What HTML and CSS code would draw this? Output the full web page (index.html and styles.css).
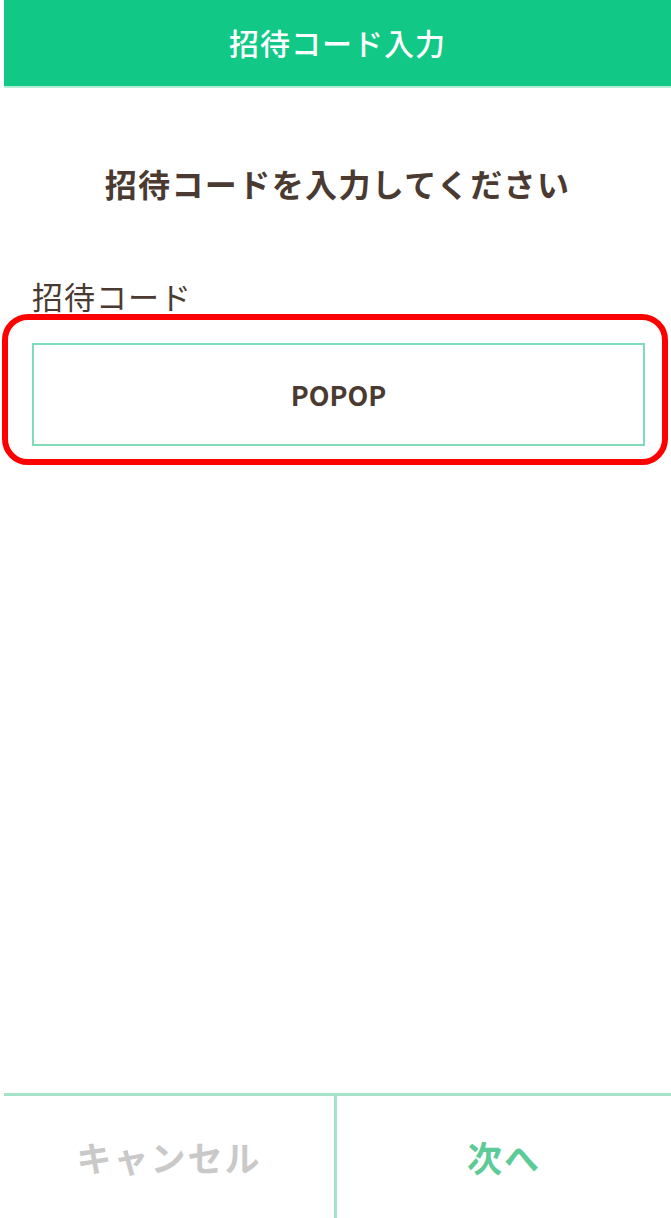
FILE: index.html
```html
<!DOCTYPE html>
<html lang="ja">
<head>
<meta charset="utf-8">
<link rel="stylesheet" href="styles.css">
</head>
<body>
<div class="page">
  <header class="header"><h1 class="header-title">招待コード入力</h1></header>
  <main class="main">
    <h2 class="title">招待コードを入力してください</h2>
    <div class="label">招待コード</div>
    <div class="highlight">
      <div class="input">POPOP</div>
    </div>
  </main>
  <footer class="footer">
    <div class="btn btn-cancel">キャンセル</div>
    <div class="btn btn-next">次へ</div>
  </footer>
</div>
</body>
</html>
```
FILE: styles.css
```css
html, body { margin: 0; padding: 0; background: #fff; }
body {
  font-family: "Noto Sans CJK JP", "Noto Sans", sans-serif;
  width: 671px;
  height: 1218px;
  overflow: hidden;
}
.page {
  height: 1218px;
  display: flex;
  flex-direction: column;
}
.header {
  margin-left: 4px;
  height: 86px;
  background: #12c886;
  border-bottom: 2px solid #b4eed6;
  display: flex;
  align-items: center;
  justify-content: center;
}
.header-title {
  margin: 0;
  color: #fff;
  font-size: 30px;
  font-weight: 500;
  letter-spacing: 1px;
  line-height: 1;
  padding-bottom: 2px;
}
.main {
  flex: 1;
  display: flex;
  flex-direction: column;
}
.title {
  margin: 77px 0 0;
  text-align: center;
  color: #4a3a31;
  font-size: 32px;
  font-weight: 700;
  line-height: 36px;
  letter-spacing: 1.4px;
  padding-left: 4px;
}
.label {
  margin: 77px 0 0 32px;
  color: #4a3a31;
  font-size: 31px;
  line-height: 36px;
  letter-spacing: 1px;
}
.highlight {
  box-sizing: border-box;
  margin: 0 3px 0 2px;
  height: 151px;
  border: 6px solid #ff0000;
  border-radius: 26px;
  padding: 23px 17px 0 24px;
}
.input {
  box-sizing: border-box;
  height: 103px;
  border: 2px solid #7fdcb8;
  display: flex;
  align-items: center;
  justify-content: center;
  color: #4a3a31;
  font-size: 27px;
  font-weight: 700;
}
.footer {
  margin-left: 4px;
  height: 122px;
  border-top: 3px solid #a6e2c8;
  display: grid;
  grid-template-columns: 333px 1fr;
}
.btn {
  display: flex;
  align-items: center;
  justify-content: center;
  font-size: 35px;
  font-weight: 700;
  letter-spacing: 2px;
  padding-bottom: 2px;
}
.btn-cancel {
  color: #c9c9c9;
  border-right: 3px solid #a6e2c8;
}
.btn-next {
  color: #5ccb97;
}
```
